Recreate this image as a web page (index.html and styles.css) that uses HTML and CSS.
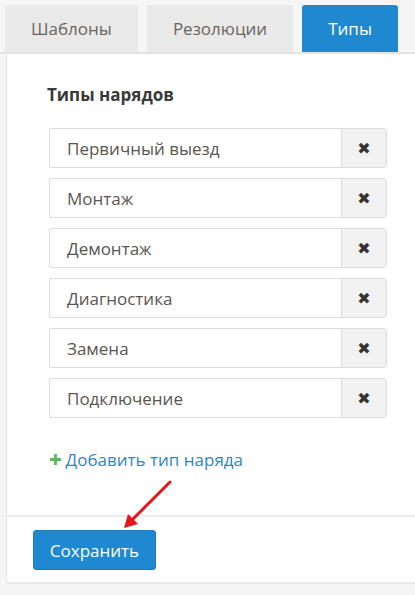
FILE: index.html
```html
<!DOCTYPE html>
<html lang="ru">
<head>
<meta charset="utf-8">
<title>Типы нарядов</title>
<link rel="stylesheet" href="styles.css">
</head>
<body>
<div class="page">
  <nav class="tabs">
    <div class="tab">Шаблоны</div>
    <div class="tab">Резолюции</div>
    <div class="tab tab-active">Типы</div>
  </nav>
  <section class="panel">
    <div class="panel-body">
      <h3 class="heading">Типы нарядов</h3>
      <ul class="type-list">
        <li class="input-group"><span class="input">Первичный выезд</span><button class="remove" type="button">✖</button></li>
        <li class="input-group"><span class="input">Монтаж</span><button class="remove" type="button">✖</button></li>
        <li class="input-group"><span class="input">Демонтаж</span><button class="remove" type="button">✖</button></li>
        <li class="input-group"><span class="input">Диагностика</span><button class="remove" type="button">✖</button></li>
        <li class="input-group"><span class="input">Замена</span><button class="remove" type="button">✖</button></li>
        <li class="input-group"><span class="input">Подключение</span><button class="remove" type="button">✖</button></li>
      </ul>
      <a class="add-link" href="#"><span class="plus">✚</span>Добавить тип наряда</a>
    </div>
    <div class="panel-footer">
      <button class="save" type="button">Сохранить</button>
    </div>
  </section>
  <svg class="arrow" width="60" height="60" viewBox="0 0 60 60">
    <line x1="54" y1="6" x2="16" y2="44" stroke="#e5171a" stroke-width="3" stroke-linecap="round"/>
    <polygon points="8,52 12,38 22,48" fill="#e5171a"/>
  </svg>
</div>
</body>
</html>
```
FILE: styles.css
```css
* { box-sizing: border-box; }
html, body { margin: 0; padding: 0; }
body {
  background: #f5f5f5;
  font-family: "Open Sans", "Liberation Sans", sans-serif;
  font-size: 17px;
  color: #555;
}
.page { position: relative; width: 415px; height: 595px; overflow: hidden; }
.tabs {
  display: flex;
  gap: 9px;
  padding: 5px 0 0 5px;
  border-bottom: 2px solid #e3e3e3;
}
.tab {
  height: 47px;
  display: flex;
  align-items: center;
  padding: 0 26px;
  background: #e9e9e9;
  color: #6b6462;
  border-radius: 3px 3px 0 0;
}
.tab-active { background: #1e88d0; color: #fff; }
.panel {
  margin-left: 6px;
  background: #fff;
  border-left: 1px solid #e3e3e3;
  border-bottom: 2px solid #e8e8e8;
  border-bottom-left-radius: 4px;
}
.panel-body { padding: 29px 28px 44px 42px; }
.heading {
  margin: 0 0 21px -2px;
  font-size: 17px;
  font-weight: 700;
  color: #3a3a3a;
  line-height: 24px;
}
.type-list { list-style: none; margin: 0; padding: 0; display: flex; flex-direction: column; gap: 10px; }
.input-group { display: flex; width: 338px; height: 40px; }
.input {
  flex: 1;
  display: flex;
  align-items: center;
  padding-left: 17px;
  border: 1px solid #dcdcdc;
  border-right: none;
  border-radius: 3px 0 0 3px;
  color: #5a5552;
}
.remove {
  width: 46px;
  border: 1px solid #dcdcdc;
  border-radius: 0 4px 4px 0;
  background: #f2f2f2;
  color: #333;
  font-size: 16px;
  padding: 0;
  font-family: "DejaVu Sans", sans-serif;
}
.add-link {
  display: inline-flex;
  align-items: center;
  margin-top: 30px;
  color: #3585c4;
  text-decoration: none;
}
.plus { color: #5cb85c; font-size: 15px; margin-right: 4px; font-family: "DejaVu Sans", sans-serif; }
.panel-footer {
  border-top: 2px solid #ececec;
  padding: 13px 0 12px 26px;
}
.save {
  width: 123px;
  height: 40px;
  background: #1e88d0;
  border: 1px solid #1a7bbd;
  border-radius: 3px;
  color: #fff;
  font-family: inherit;
  font-size: 17px;
}
.arrow { position: absolute; left: 116px; top: 476px; }
```
